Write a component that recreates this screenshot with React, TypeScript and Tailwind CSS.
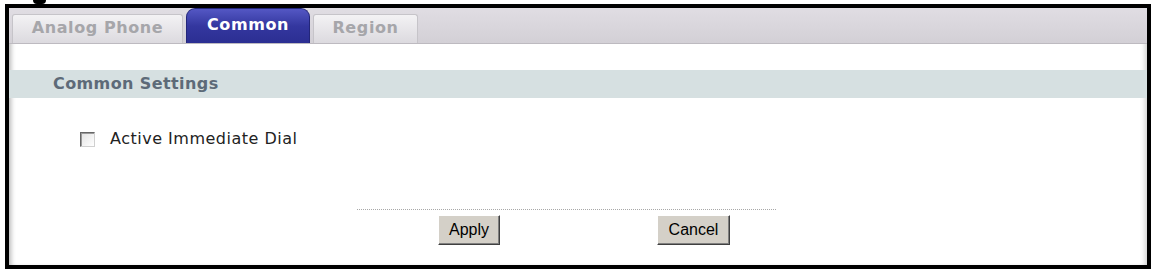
import { useState } from "react";

const TABS = [
  { label: "Analog Phone", w: "w-[171px]" },
  { label: "Common", w: "w-[124px]" },
  { label: "Region", w: "w-[105px]" },
];

export default function App() {
  const [tab, setTab] = useState(1);
  const [dial, setDial] = useState(false);

  return (
    <div className="w-[1151px] h-[271px] bg-white font-['DejaVu_Sans',Verdana,sans-serif]">
      {/* remnant of the figure caption cut by the crop */}
      <div className="h-[4px]">
        <div className="ml-[33px] w-[13px] h-[4px] rounded-b-full bg-black" />
      </div>

      <div className="ml-[5px] w-[1146px] h-[265px] border-4 border-black flex flex-col shadow-[inset_5px_0_5px_-3px_#b8b8b8,inset_-5px_0_5px_-3px_#d0d0d0]">
        {/* tab bar */}
        <div className="h-[36px] shrink-0 flex items-end gap-[3px] pl-[3px] border-b border-[#bdbac0] bg-gradient-to-b from-[#e0dde3] to-[#d3d0d6]">
          {TABS.map((t, i) =>
            i === tab ? (
              <button
                key={t.label}
                onClick={() => setTab(i)}
                className={`${t.w} h-[35px] rounded-t-[9px] bg-gradient-to-b from-[#5457c4] via-[#34379f] to-[#2b2e92] border border-[#23267a] border-b-0 text-white text-[16px] font-bold tracking-[0.6px] pb-[3px]`}
              >
                {t.label}
              </button>
            ) : (
              <button
                key={t.label}
                onClick={() => setTab(i)}
                className={`${t.w} h-[29px] rounded-t-[3px] bg-gradient-to-b from-[#f3f2f4] to-[#dcdadf] border border-[#c6c4c9] border-b-0 text-[#a6a6aa] text-[16px] font-bold tracking-[0.6px] pb-[2px]`}
              >
                {t.label}
              </button>
            )
          )}
        </div>

        {/* section header */}
        <div className="mt-[26px] h-[28px] shrink-0 flex items-center pl-[44px] bg-[#d6e0e1] text-[#5d6a78] text-[16px] font-bold tracking-[0.4px]">
          Common Settings
        </div>

        {/* option row */}
        <label className="mt-[30px] h-[22px] flex items-center text-[16px] text-[#222] tracking-[0.5px] cursor-pointer">
          <span
            onClick={() => setDial(!dial)}
            className="ml-[71px] w-[15px] h-[15px] border border-t-[#666] border-l-[#666] border-r-[#d0d0d0] border-b-[#d0d0d0] bg-gradient-to-br from-[#e2e2e2] to-white shadow-[inset_1px_1px_0_#9a9a9a] flex items-center justify-center text-[11px] leading-none"
          >
            {dial ? "✓" : ""}
          </span>
          <span className="ml-[15px]">Active Immediate Dial</span>
        </label>

        {/* dotted separator */}
        <div className="mt-[59px] ml-[348px] w-[419px] border-t border-dotted border-[#a8a8a8]" />

        {/* buttons */}
        <div className="mt-[5px] flex font-['Liberation_Sans',Arial,sans-serif] text-[16px] text-black">
          <button className="ml-[429px] w-[62px] h-[30px] bg-[#d4d0c8] border border-t-white border-l-white border-r-[#404040] border-b-[#404040] shadow-[inset_-1px_-1px_0_#808080]">
            Apply
          </button>
          <button className="ml-[157px] w-[73px] h-[30px] bg-[#d4d0c8] border border-t-white border-l-white border-r-[#404040] border-b-[#404040] shadow-[inset_-1px_-1px_0_#808080]">
            Cancel
          </button>
        </div>
      </div>
    </div>
  );
}
